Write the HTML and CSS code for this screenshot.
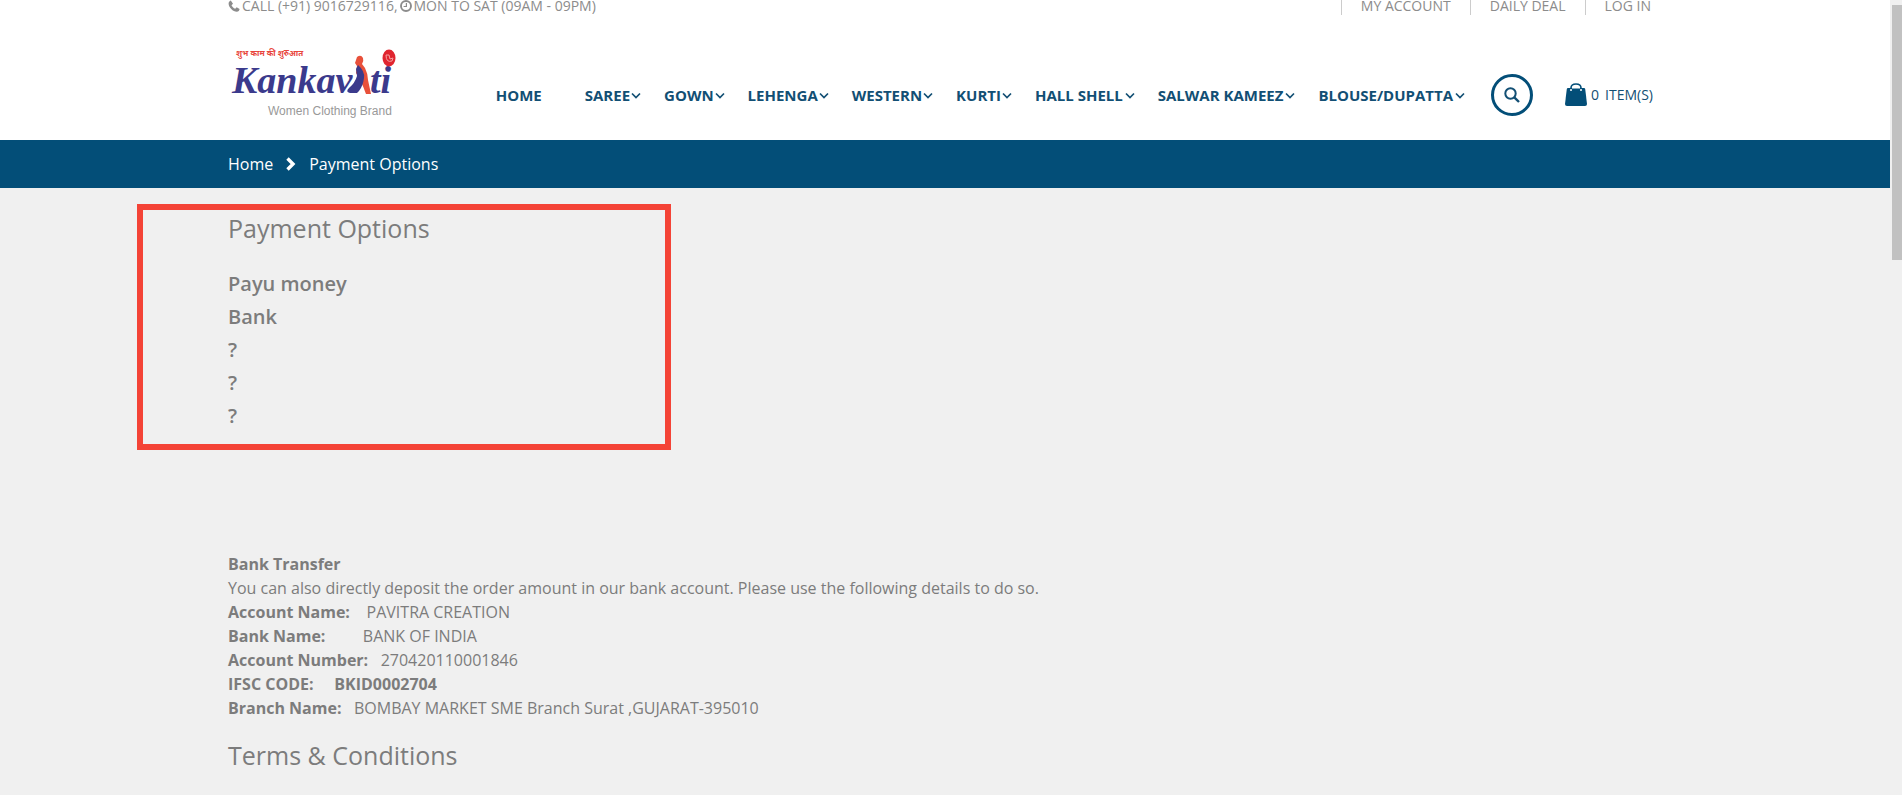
FILE: index.html
```html
<!DOCTYPE html>
<html lang="en">
<head>
<meta charset="utf-8">
<title>Payment Options - Kankavati</title>
<link rel="stylesheet" href="styles.css">
</head>
<body>
<svg class="sprite" aria-hidden="true">
  <symbol id="chevron" viewBox="0 0 10 7"><path d="M1 1.500l4 4 4-4" fill="none" stroke="currentColor" stroke-width="1.700"/></symbol>
</svg>
<div class="page">
  <header class="header">
    <div class="container topbar">
      <p class="contact">
        <svg class="contact-icon" viewBox="0 0 12 14" aria-hidden="true"><path d="M2.800 0.500C1.500 1 .6 2 .6 3.600c0 4 4.400 8.200 8.200 8.200 1.600 0 2.600-1.200 2.800-2.800L8.700 7.200 7.200 8.800C5.600 8.200 4 6.600 3.500 5.200l1.500-1.400z" fill="currentColor"/></svg>
        <span>CALL (+91) 9016729116,</span>
        <svg class="contact-icon" viewBox="0 0 12 14" aria-hidden="true"><circle cx="6" cy="6" r="5" fill="none" stroke="currentColor" stroke-width="1.900"/><path d="M6.400 3v3.500H3.600" fill="none" stroke="currentColor" stroke-width="1.200"/></svg>
        <span>MON TO SAT (09AM - 09PM)</span>
      </p>
      <nav class="account" aria-label="Account">
        <a href="#">MY ACCOUNT</a>
        <a href="#">DAILY DEAL</a>
        <a href="#">LOG IN</a>
      </nav>
    </div>
    <div class="container mainbar">
      <a class="logo" href="#" aria-label="Kankavati Women Clothing Brand">
        <svg viewBox="0 0 172 76" width="172" height="76">
          <text class="logo-tag" x="8" y="11">शुभ काम की शुरुआत</text>
          <text class="logo-name" x="4" y="48">Kankav</text>
          <text class="logo-name" x="142" y="48">ti</text>
          <path d="M129 12q4-3 6 1 1 3-1 6l3 4q3 6 3 12l3 14h-5q-5-14-10-21l1-7-2-3z" fill="#e8503a"/>
          <path d="M130 20q7 6 6 13-1 8-5 13l-2 2h-7q-5-1-1-5 6-5 8-12l-1-7z" fill="#3b3a8c"/>
          <ellipse cx="161" cy="13" rx="6.500" ry="8.500" fill="#e0252f"/>
          <path d="M158 10q0 8 6 6l1-3-3 1-1-4z" fill="none" stroke="#f6a0a0" stroke-width="1"/>
          <text class="logo-sub" x="40" y="70">Women Clothing Brand</text>
        </svg>
      </a>
      <nav class="menu" aria-label="Main">
        <a class="menu-home" href="#">HOME</a>
        <a href="#">SAREE<svg><use href="#chevron"/></svg></a>
        <a href="#">GOWN<svg><use href="#chevron"/></svg></a>
        <a href="#">LEHENGA<svg><use href="#chevron"/></svg></a>
        <a href="#">WESTERN<svg><use href="#chevron"/></svg></a>
        <a href="#">KURTI<svg><use href="#chevron"/></svg></a>
        <a class="spaced" href="#">HALL SHELL<svg><use href="#chevron"/></svg></a>
        <a class="spaced" href="#">SALWAR KAMEEZ<svg><use href="#chevron"/></svg></a>
        <a class="spaced" href="#">BLOUSE/DUPATTA<svg><use href="#chevron"/></svg></a>
      </nav>
      <button class="search" type="button" aria-label="Search">
        <svg viewBox="0 0 16 16" width="16" height="16"><circle cx="6.500" cy="6.500" r="5.200" fill="none" stroke="currentColor" stroke-width="2"/><path d="M10.300 10.300L15 15" stroke="currentColor" stroke-width="2.400"/></svg>
      </button>
      <a class="cart" href="#">
        <svg viewBox="0 0 22 24" width="22" height="24" aria-hidden="true"><path d="M3 5h16q1 0 1.200 1L22 21q0 2-2 2H2q-2 0-2-2L1.800 6Q2 5 3 5z" fill="currentColor"/><path d="M6 7V5q0-4 5-4t5 4v2" fill="none" stroke="currentColor" stroke-width="1.600"/><path d="M7 5h8" stroke="#fff" stroke-width="1"/><circle cx="6" cy="7" r="1" fill="#fff"/><circle cx="16" cy="7" r="1" fill="#fff"/></svg>
        <span>0</span><span class="cart-label">ITEM(S)</span>
      </a>
    </div>
  </header>
  <nav class="crumbs" aria-label="Breadcrumb">
    <div class="container crumbs-row">
      <a href="#">Home</a>
      <svg viewBox="0 0 10 14" width="10" height="14" aria-hidden="true"><path d="M1.500 1.500L7 7l-5.500 5.500" fill="none" stroke="currentColor" stroke-width="3.400"/></svg>
      <span>Payment Options</span>
    </div>
  </nav>
  <main class="container content">
    <section class="options">
      <h1>Payment Options</h1>
      <ul>
        <li>Payu money</li>
        <li>Bank</li>
        <li>?</li>
        <li>?</li>
        <li>?</li>
      </ul>
    </section>
    <section class="bank">
      <p><b>Bank Transfer</b></p>
      <p>You can also directly deposit the order amount in our bank account. Please use the following details to do so.</p>
      <p><b>Account Name:</b>&nbsp;&nbsp;&nbsp; PAVITRA CREATION</p>
      <p><b>Bank Name:</b>&nbsp;&nbsp;&nbsp;&nbsp;&nbsp;&nbsp;&nbsp;&nbsp; BANK OF INDIA</p>
      <p><b>Account Number:</b>&nbsp;&nbsp; 270420110001846</p>
      <p><b>IFSC CODE:&nbsp;&nbsp;&nbsp;&nbsp; BKID0002704</b></p>
      <p><b>Branch Name:</b>&nbsp;&nbsp; BOMBAY MARKET SME Branch Surat ,GUJARAT-395010</p>
    </section>
    <h2>Terms &amp; Conditions</h2>
  </main>
</div>
<div class="scrollbar" aria-hidden="true"><div class="thumb"></div></div>
</body>
</html>
```
FILE: styles.css
```css
* {
  box-sizing: border-box;
}

body {
  margin: 0;
  min-height: 100vh;
  display: flex;
  background: #f0f0f0;
  color: #7c7c7c;
  font: 16px/24px "Open Sans", sans-serif;
}

h1, h2, p, ul {
  margin: 0;
  padding: 0;
}

a {
  color: inherit;
  text-decoration: none;
}

.sprite {
  display: none;
}

.page {
  flex: 1;
}

.container {
  max-width: 1434px;
  margin: 0 auto;
}

.header {
  background: #fff;
}

.topbar {
  display: flex;
  justify-content: space-between;
  height: 16px;
  font-size: 14px;
  line-height: 12px;
  color: #8c8c8c;
}

.contact {
  display: flex;
  gap: 2px;
}

.contact-icon {
  width: 12px;
  height: 14px;
}

.account {
  display: flex;
  padding-right: 11px;
}

.account a {
  height: 15px;
  padding: 0 19px;
  border-left: 1px solid #ccc;
}

.account a:last-child {
  padding-right: 0;
}

.mainbar {
  display: flex;
  align-items: center;
  height: 124px;
  padding-top: 34px;
  color: #124f74;
}

.logo {
  margin-bottom: 24px;
  display: flex;
}

.logo-tag {
  font: 700 8px "Noto Sans", sans-serif;
  fill: #e8453c;
}

.logo-name {
  font: italic 700 38px "Liberation Serif", serif;
  fill: #3b3a8c;
}

.logo-sub {
  font: 12px "Liberation Sans", sans-serif;
  fill: #999;
}

.menu {
  display: flex;
  gap: 23px;
  margin: 0 26px 0 auto;
  font-size: 15px;
  font-weight: 700;
  white-space: nowrap;
}

.menu a {
  display: flex;
  align-items: center;
  gap: 1px;
}

.menu .spaced {
  gap: 2px;
}

.menu .menu-home {
  margin-right: 20px;
}

.menu svg {
  width: 10px;
  height: 7px;
}

.search {
  display: grid;
  place-items: center;
  width: 42px;
  height: 42px;
  margin: 0 32px 0 0;
  padding: 0;
  border: 3px solid #034e78;
  border-radius: 50%;
  background: #fff;
  color: #124f74;
}

.cart {
  display: flex;
  align-items: center;
  gap: 4px;
  margin-right: 9px;
  font-size: 14px;
}

.cart svg {
  color: #034e78;
}

.cart-label {
  margin-left: 2px;
}

.crumbs {
  background: #034e78;
  color: #fff;
}

.crumbs-row {
  display: flex;
  align-items: center;
  gap: 13px;
  height: 48px;
}

.content {
  padding-top: 16px;
}

.options {
  width: 534px;
  margin-left: -91px;
  padding: 0 0 12px 85px;
  border: 6px solid #f44336;
}

h1, h2 {
  font-size: 25px;
  font-weight: 400;
  line-height: 36px;
}

.options ul {
  padding-top: 21px;
  list-style: none;
  font-size: 20px;
  font-weight: 600;
  line-height: 33px;
}

.bank {
  padding: 102px 0 17px;
}

.scrollbar {
  width: 12px;
  padding: 5px 0 0 2px;
}

.thumb {
  height: 255px;
  background: #c1c1c1;
}
```
